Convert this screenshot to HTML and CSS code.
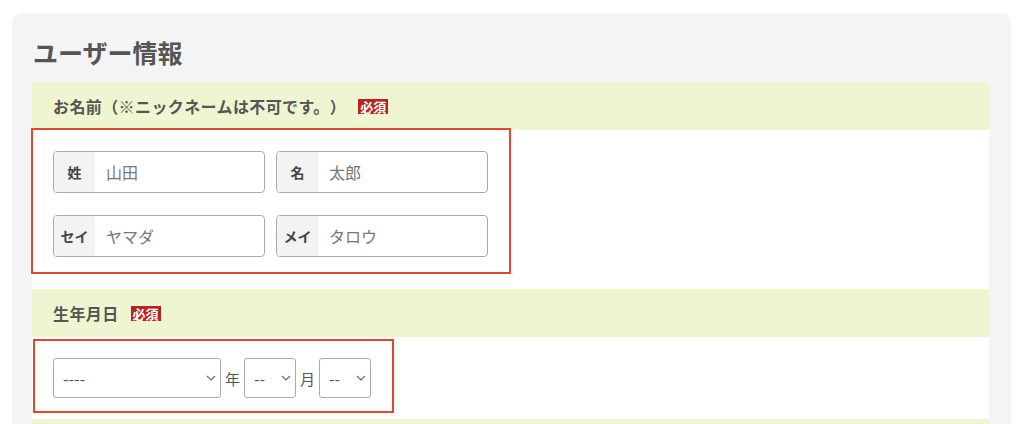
FILE: index.html
```html
<!DOCTYPE html>
<html lang="ja">
<head>
    <meta charset="UTF-8">
    <meta name="viewport" content="width=device-width, initial-scale=1.0">
    <title>ユーザー情報</title>
    <link rel="stylesheet" href="styles.css">
</head>
<body>
<div class="panel">
    <h2 class="panel-title">ユーザー情報</h2>

    <div class="field-head">お名前（※ニックネームは不可です。）<span class="required">必須</span></div>
    <div class="field-body">
        <div class="name-grid">
            <label class="name-input"><span class="name-label">姓</span><span class="name-value">山田</span></label>
            <label class="name-input"><span class="name-label">名</span><span class="name-value">太郎</span></label>
            <label class="name-input"><span class="name-label">セイ</span><span class="name-value">ヤマダ</span></label>
            <label class="name-input"><span class="name-label">メイ</span><span class="name-value">タロウ</span></label>
        </div>
        <div class="mark mark-name"></div>
    </div>

    <div class="field-head">生年月日<span class="required">必須</span></div>
    <div class="field-body birth">
        <div class="birth-row">
            <div class="select select-year">
                <select><option>----</option></select>
                <svg class="chev" width="10" height="6" viewBox="0 0 10 6"><path d="M1 1l4 4 4-4" fill="none" stroke="#666" stroke-width="1.1"/></svg>
            </div>
            <span class="unit">年</span>
            <div class="select select-small">
                <select><option>--</option></select>
                <svg class="chev" width="10" height="6" viewBox="0 0 10 6"><path d="M1 1l4 4 4-4" fill="none" stroke="#666" stroke-width="1.1"/></svg>
            </div>
            <span class="unit">月</span>
            <div class="select select-small">
                <select><option>--</option></select>
                <svg class="chev" width="10" height="6" viewBox="0 0 10 6"><path d="M1 1l4 4 4-4" fill="none" stroke="#666" stroke-width="1.1"/></svg>
            </div>
        </div>
        <div class="mark mark-birth"></div>
    </div>

    <div class="field-head">&nbsp;</div>
</div>
</body>
</html>
```

FILE: styles.css
```css
body {
    margin: 0;
    font-family: "Noto Sans CJK JP", "Noto Sans", sans-serif;
    background-color: #fff;
    color: #555;
    text-spacing-trim: space-all;
}

.panel {
    margin: 13px 13px 0 12px;
    padding: 22px 22px 0 20px;
    background-color: #f4f4f4;
    border-radius: 10px 10px 0 0;
}

.panel-title {
    margin: 0 0 13px 1px;
    font-size: 25px;
    line-height: 34px;
    font-weight: bold;
    color: #555;
}

.field-head {
    display: flex;
    align-items: center;
    height: 48px;
    padding-left: 21px;
    background-color: #eef5d0;
    font-size: 16px;
    font-weight: bold;
    letter-spacing: 0.4px;
    color: #555;
}

.required {
    margin-left: 12px;
    padding: 0 2px;
    height: 15px;
    line-height: 15px;
    background-color: #b8241b;
    color: #fff;
    font-size: 13px;
    font-weight: bold;
    letter-spacing: 0;
}

.field-body {
    position: relative;
    background-color: #fff;
    padding: 21px 21px 32px;
}

.field-body.birth {
    padding-bottom: 21px;
}

.name-grid {
    display: grid;
    grid-template-columns: 212px 212px;
    column-gap: 11px;
    row-gap: 22px;
}

.name-input {
    display: flex;
    height: 42px;
    box-sizing: border-box;
    border: 1px solid #aaa;
    border-radius: 4px;
    overflow: hidden;
}

.name-label {
    display: flex;
    align-items: center;
    justify-content: center;
    width: 41px;
    background-color: #f3f3f3;
    font-size: 14px;
    font-weight: bold;
    color: #444;
}

.name-value {
    display: flex;
    align-items: center;
    padding-left: 11px;
    font-size: 16px;
    color: #777;
}

.birth-row {
    display: flex;
    align-items: center;
}

.select {
    position: relative;
    height: 40px;
}

.select select {
    appearance: none;
    width: 100%;
    height: 100%;
    margin: 0;
    padding: 0 0 0 9px;
    border: 1px solid #aaa;
    border-radius: 3px;
    background-color: #fff;
    font-family: inherit;
    font-size: 16px;
    color: #555;
}

.select-year {
    width: 168px;
}

.select-small {
    width: 52px;
}

.chev {
    position: absolute;
    right: 5px;
    top: 17px;
}

.unit {
    margin: 0 4px;
    font-size: 15px;
    color: #555;
}

.mark {
    position: absolute;
    border: 2px solid #e8452e;
    box-sizing: border-box;
    pointer-events: none;
}

.mark-name {
    left: -1px;
    top: -2px;
    width: 480px;
    height: 146px;
}

.mark-birth {
    left: 1px;
    top: 2px;
    width: 361px;
    height: 74px;
}
```
